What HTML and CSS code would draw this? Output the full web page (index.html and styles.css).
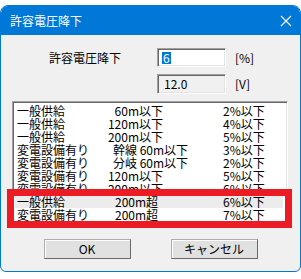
FILE: index.html
```html
<!DOCTYPE html>
<html lang="ja">
<head>
  <meta charset="UTF-8" />
  <title>許容電圧降下</title>
  <link rel="stylesheet" href="styles.css">
</head>
<body>

<div class="window">
  <div class="titlebar">
    <span class="title">許容電圧降下</span>
    <svg class="close" width="12" height="12" viewBox="0 0 12 12">
      <path d="M1 1 L11 11 M11 1 L1 11" stroke="#fff" stroke-width="1.1" fill="none"/>
    </svg>
  </div>

  <div class="client">
    <div class="form">
      <div class="form-label">許容電圧降下</div>
      <div class="field edit"><span class="sel">6</span></div>
      <div class="unit">[%]</div>
      <div></div>
      <div class="field readonly">12.0</div>
      <div class="unit">[V]</div>
    </div>

    <div class="listbox">
      <div class="row"><span class="c1">一般供給</span><span class="c2 r">60m以下</span><span class="c3">2%以下</span></div>
      <div class="row"><span class="c1">一般供給</span><span class="c2 r">120m以下</span><span class="c3">4%以下</span></div>
      <div class="row"><span class="c1">一般供給</span><span class="c2 r">200m以下</span><span class="c3">5%以下</span></div>
      <div class="row"><span class="c1">変電設備有り</span><span class="c2 l">幹線 60m以下</span><span class="c3">3%以下</span></div>
      <div class="row"><span class="c1">変電設備有り</span><span class="c2 l">分岐 60m以下</span><span class="c3">2%以下</span></div>
      <div class="row"><span class="c1">変電設備有り</span><span class="c2 r">120m以下</span><span class="c3">5%以下</span></div>
      <div class="row"><span class="c1">変電設備有り</span><span class="c2 r">200m以下</span><span class="c3">6%以下</span></div>
      <div class="row hover"><span class="c1">一般供給</span><span class="c2">200m超</span><span class="c3">6%以下</span></div>
      <div class="row"><span class="c1">変電設備有り</span><span class="c2">200m超</span><span class="c3">7%以下</span></div>
    </div>

    <div class="buttons">
      <button class="btn">OK</button>
      <button class="btn">キャンセル</button>
    </div>
  </div>
</div>

<!-- red annotation frame -->
<div class="mark"></div>

</body>
</html>
```

FILE: styles.css
```css
body {
  margin: 0;
  background: #fff;
  font-family: "Noto Sans CJK JP", "Noto Sans", sans-serif;
  font-size: 12px;
  color: #000;
  position: relative;
}
.window {
  margin-top: 5px;
  width: 301px;
  height: 267px;
  box-sizing: border-box;
  border: 1px solid #0078d7;
  border-radius: 8px 8px 6px 6px;
  overflow: hidden;
  background: #f0f0f0;
}
.titlebar {
  height: 29px;
  background: #0078d7;
  color: #fff;
  display: flex;
  align-items: center;
  justify-content: space-between;
  padding: 0 8px 0 9px;
}
.title {
  font-size: 12px;
  line-height: 14px;
}
.close {
  display: block;
}
.client {
  padding-top: 13px;
}
.form {
  display: grid;
  grid-template-columns: 156px 69px auto;
  grid-template-rows: 19px 20px;
  row-gap: 7px;
  align-items: center;
}
.form-label {
  padding-left: 48px;
  line-height: 14px;
}
.field {
  height: 100%;
  box-sizing: border-box;
  border: 1px solid;
  border-color: #a0a0a0 #fff #fff #a0a0a0;
  box-shadow: inset 1px 1px 0 #696969, inset -1px -1px 0 #e3e3e3;
  display: flex;
  align-items: center;
  padding-left: 4px;
  line-height: 12px;
}
.edit {
  background: #fff;
}
.readonly {
  background: #f0f0f0;
  padding-left: 6px;
}
.sel {
  background: #0078d7;
  color: #fff;
  padding: 0 1px;
  line-height: 12px;
}
.unit {
  padding-left: 9px;
  line-height: 14px;
}
.listbox {
  margin: 7px 0 0 11px;
  width: 276px;
  height: 123px;
  box-sizing: border-box;
  background: #fff;
  border: 1px solid;
  border-color: #a0a0a0 #fff #fff #a0a0a0;
  box-shadow: inset 1px 1px 0 #696969, inset -1px -1px 0 #e3e3e3;
  padding: 2px 4px 0 2px;
  overflow: hidden;
}
.row {
  display: grid;
  grid-template-columns: 100px 108px 1fr;
  height: 13px;
  line-height: 13px;
  white-space: nowrap;
}
.row.hover {
  background: #ececec;
}
.c1 {
  padding-left: 2px;
}
.c2.l {
  margin-left: -2px;
}
.c2.r {
  width: 48px;
  display: flex;
  justify-content: flex-end;
}
.buttons {
  display: flex;
  justify-content: center;
  gap: 40px;
  margin-top: 15px;
}
.btn {
  width: 87px;
  height: 20px;
  padding: 0;
  font-family: inherit;
  font-size: 12px;
  line-height: 14px;
  background: #e1e1e1;
  border: 1px solid;
  border-color: #adadad #696969 #696969 #adadad;
  box-shadow: inset 1px 1px 0 #fff;
}
.mark {
  position: absolute;
  left: 7px;
  top: 189px;
  width: 285px;
  height: 39px;
  box-sizing: border-box;
  border: 7px solid #ed1c24;
}
```
